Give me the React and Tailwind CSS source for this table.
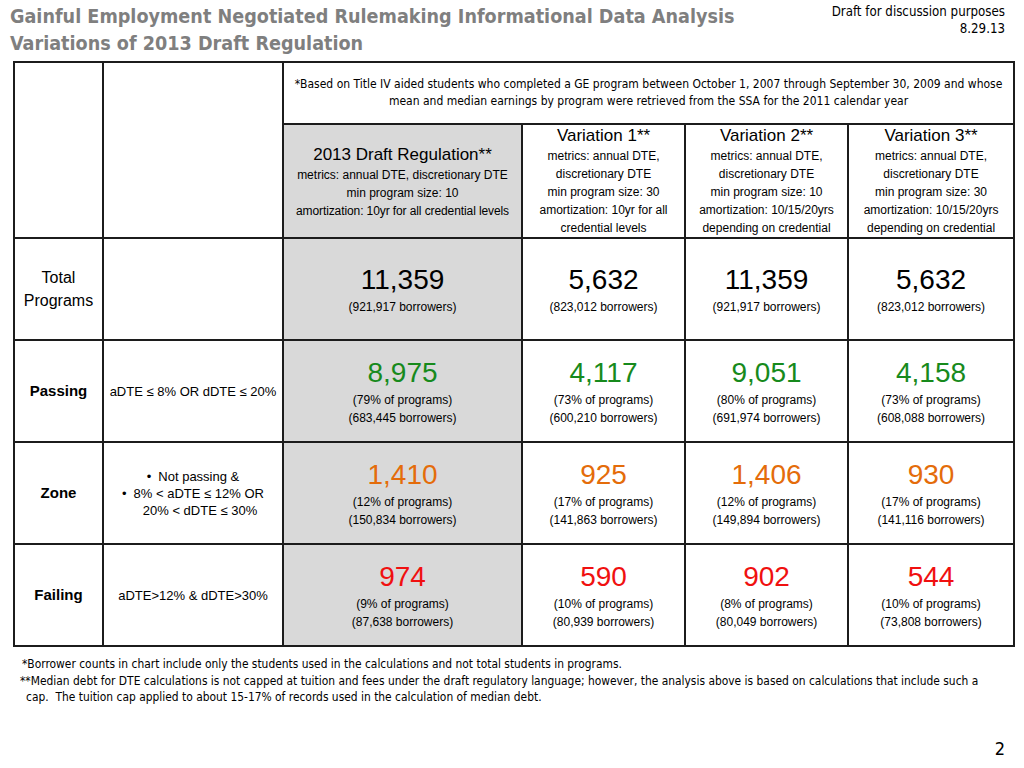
import React from "react";

const rows = [
    {
        label: "Total Programs",
        bold: false,
        color: "text-black",
        values: [
            { n: "11,359", lines: ["(921,917 borrowers)"] },
            { n: "5,632", lines: ["(823,012 borrowers)"] },
            { n: "11,359", lines: ["(921,917 borrowers)"] },
            { n: "5,632", lines: ["(823,012 borrowers)"] },
        ],
    },
    {
        label: "Passing",
        bold: true,
        criteria: ["aDTE ≤ 8% OR dDTE ≤ 20%"],
        color: "text-[#178a1c]",
        values: [
            { n: "8,975", lines: ["(79% of programs)", "(683,445 borrowers)"] },
            { n: "4,117", lines: ["(73% of programs)", "(600,210 borrowers)"] },
            { n: "9,051", lines: ["(80% of programs)", "(691,974 borrowers)"] },
            { n: "4,158", lines: ["(73% of programs)", "(608,088 borrowers)"] },
        ],
    },
    {
        label: "Zone",
        bold: true,
        zone: true,
        color: "text-[#e46c0a]",
        values: [
            { n: "1,410", lines: ["(12% of programs)", "(150,834 borrowers)"] },
            { n: "925", lines: ["(17% of programs)", "(141,863 borrowers)"] },
            { n: "1,406", lines: ["(12% of programs)", "(149,894 borrowers)"] },
            { n: "930", lines: ["(17% of programs)", "(141,116 borrowers)"] },
        ],
    },
    {
        label: "Failing",
        bold: true,
        criteria: ["aDTE>12% & dDTE>30%"],
        color: "text-[#f01010]",
        values: [
            { n: "974", lines: ["(9% of programs)", "(87,638 borrowers)"] },
            { n: "590", lines: ["(10% of programs)", "(80,939 borrowers)"] },
            { n: "902", lines: ["(8% of programs)", "(80,049 borrowers)"] },
            { n: "544", lines: ["(10% of programs)", "(73,808 borrowers)"] },
        ],
    },
];

const variations = [
    { title: "Variation 1**", lines: ["metrics: annual DTE,", "discretionary DTE", "min program size: 30", "amortization: 10yr for all", "credential levels"] },
    { title: "Variation 2**", lines: ["metrics: annual DTE,", "discretionary DTE", "min program size: 10", "amortization: 10/15/20yrs", "depending on credential"] },
    { title: "Variation 3**", lines: ["metrics: annual DTE,", "discretionary DTE", "min program size: 30", "amortization: 10/15/20yrs", "depending on credential"] },
];

const cell = "border-2 border-[#1c1c1c] text-center align-middle p-0";

const Bullet = ({ children }) => (
    <div>
        <span className="mr-[7px]">•</span>
        {children}
    </div>
);

const App = () => {
    return (
        <div className="w-[1024px] h-[768px] bg-white relative overflow-hidden font-['Liberation_Sans',Arial,sans-serif] text-black">
            {/* Title */}
            <div className="flex justify-between pl-[10px] pr-[19px] pt-[3px]">
                <div className="font-['DejaVu_Sans_Condensed',sans-serif] font-bold text-[19.6px] leading-[27px] text-[#7f7f7f]">
                    <div>Gainful Employment Negotiated Rulemaking Informational Data Analysis</div>
                    <div>Variations of 2013 Draft Regulation</div>
                </div>
                <div className="font-['DejaVu_Sans_Condensed',sans-serif] text-[13.2px] leading-[17px] text-right">
                    <div>Draft for discussion purposes</div>
                    <div>8.29.13</div>
                </div>
            </div>

            {/* Table */}
            <table className="table-fixed border-collapse w-[1000px] ml-[13px] mt-[4px]">
                <colgroup>
                    <col className="w-[89px]" />
                    <col className="w-[180px]" />
                    <col className="w-[239px]" />
                    <col className="w-[163px]" />
                    <col className="w-[163px]" />
                    <col className="w-[166px]" />
                </colgroup>
                <tbody>
                    <tr className="h-[62px]">
                        <td rowSpan={2} className={cell}></td>
                        <td rowSpan={2} className={cell}></td>
                        <td colSpan={4} className={cell}>
                            <div className="font-['DejaVu_Sans_Condensed',sans-serif] text-[12px] leading-[17px] whitespace-nowrap">
                                <div>*Based on Title IV aided students who completed a GE program between October 1, 2007 through September 30, 2009 and whose</div>
                                <div>mean and median earnings by program were retrieved from the SSA for the 2011 calendar year</div>
                            </div>
                        </td>
                    </tr>
                    <tr className="h-[111px]">
                        <td className={`${cell} bg-[#d9d9d9]`}>
                            <div className="text-[17px] leading-[22px] pt-[1px]">2013 Draft Regulation**</div>
                            <div className="text-[12px] leading-[18px]">
                                <div>metrics: annual DTE, discretionary DTE</div>
                                <div>min program size: 10</div>
                                <div className="tracking-[-0.1px]">amortization: 10yr for all credential levels</div>
                            </div>
                        </td>
                        {variations.map((v) => (
                            <td key={v.title} className={cell}>
                                <div className="text-[17px] leading-[22px]">{v.title}</div>
                                <div className="text-[12px] leading-[18px]">
                                    {v.lines.map((l) => (
                                        <div key={l}>{l}</div>
                                    ))}
                                </div>
                            </td>
                        ))}
                    </tr>
                    {rows.map((r) => (
                        <tr key={r.label} className="h-[102px]">
                            <td className={cell}>
                                <div className={r.bold ? "text-[15px] font-bold leading-[22px]" : "text-[16px] leading-[23px]"}>
                                    {r.label === "Total Programs" ? (
                                        <>
                                            <div>Total</div>
                                            <div>Programs</div>
                                        </>
                                    ) : (
                                        r.label
                                    )}
                                </div>
                            </td>
                            <td className={cell}>
                                {r.zone ? (
                                    <div className="text-[13px] leading-[17px]">
                                        <Bullet>Not passing &amp;</Bullet>
                                        <Bullet>8% &lt; aDTE ≤ 12% OR</Bullet>
                                        <div className="pl-[14px]">20% &lt; dDTE ≤ 30%</div>
                                    </div>
                                ) : (
                                    <div className="text-[13px] leading-[17px]">
                                        {r.criteria && r.criteria.map((c) => <div key={c}>{c}</div>)}
                                    </div>
                                )}
                            </td>
                            {r.values.map((v, vi) => (
                                <td key={vi} className={`${cell} ${vi === 0 ? "bg-[#d9d9d9]" : ""}`}>
                                    <div className={`text-[28px] leading-[36px] ${r.color}`}>{v.n}</div>
                                    <div className="text-[12px] leading-[18px]">
                                        {v.lines.map((l) => (
                                            <div key={l}>{l}</div>
                                        ))}
                                    </div>
                                </td>
                            ))}
                        </tr>
                    ))}
                </tbody>
            </table>

            {/* Footnotes */}
            <div className="font-['DejaVu_Sans_Condensed',sans-serif] text-[11.9px] leading-[16.5px] pl-[20px] pt-[9px]">
                <div className="pl-[2px]">*Borrower counts in chart include only the students used in the calculations and not total students in programs.</div>
                <div>**Median debt for DTE calculations is not capped at tuition and fees under the draft regulatory language; however, the analysis above is based on calculations that include such a</div>
                <div className="pl-[6px]">cap.&nbsp; The tuition cap applied to about 15-17% of records used in the calculation of median debt.</div>
            </div>

            {/* Page number */}
            <div className="absolute right-[19px] bottom-[6px] font-['DejaVu_Sans_Condensed',sans-serif] text-[18px]">2</div>
        </div>
    );
};

export default App;
